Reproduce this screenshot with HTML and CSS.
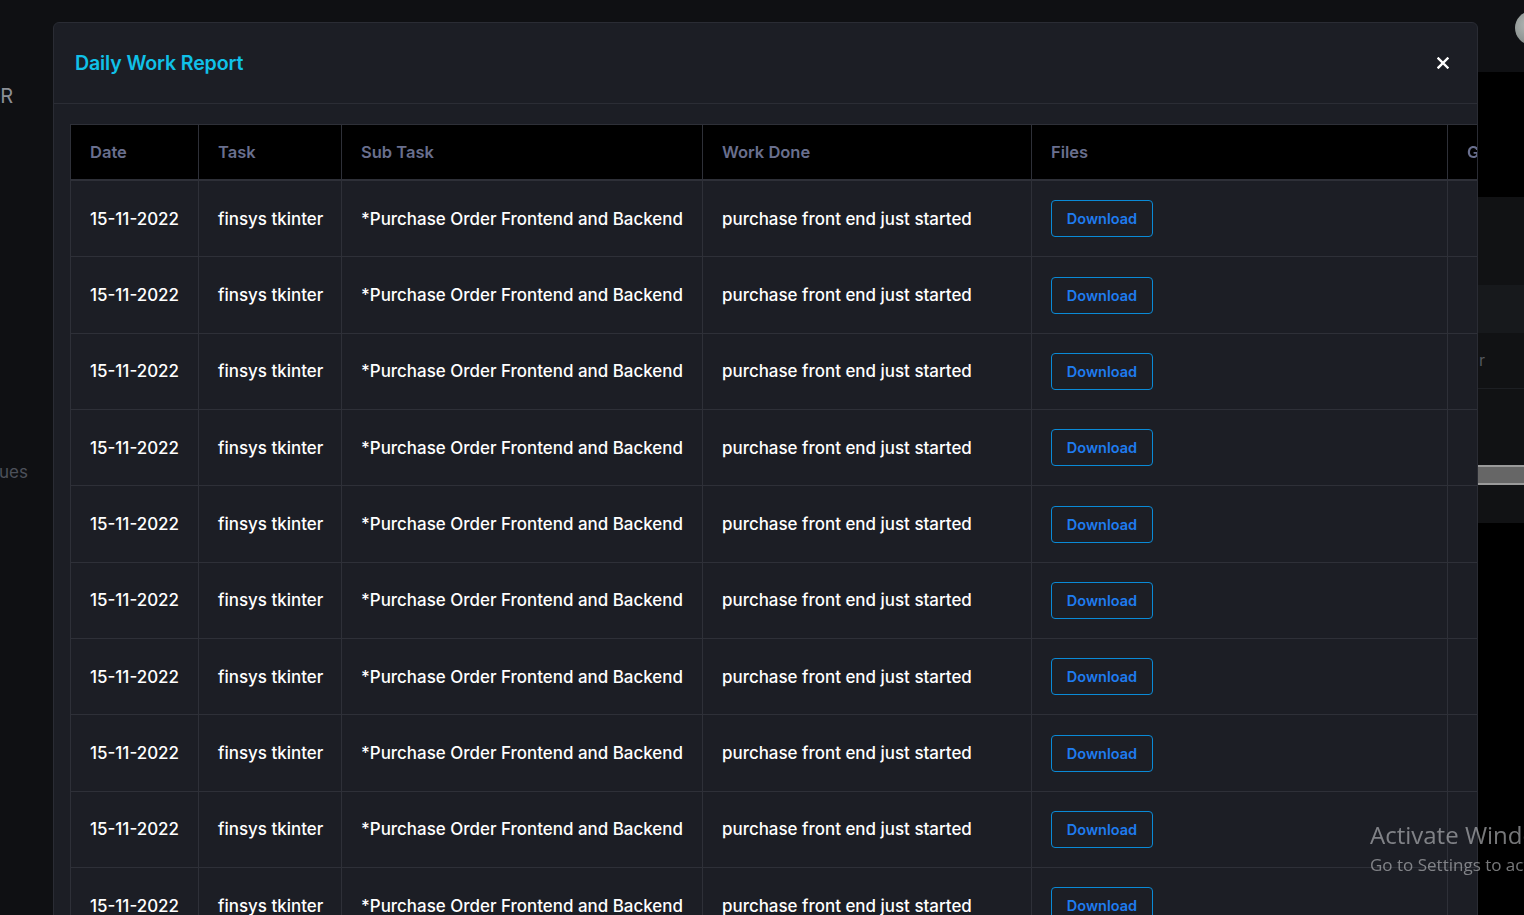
FILE: index.html
```html
<!DOCTYPE html>
<html lang="en">
<head>
<meta charset="utf-8">
<title>Daily Work Report</title>
<link rel="stylesheet" href="styles.css">
</head>
<body>
<div class="page">
  <aside class="sidebar">
    <div class="side-item side-r">R</div>
    <div class="side-item side-issues">Issues</div>
  </aside>
  <main class="main">
    <div class="topbar"><span class="avatar"></span></div>
    <div class="panel">
      <div class="blk blk-head"></div>
      <div class="blk blk-a"></div>
      <div class="blk blk-b"></div>
      <div class="blk blk-c"><span class="ghost">r</span></div>
      <div class="blk blk-d"></div>
      <div class="blk blk-bar"></div>
      <div class="blk blk-e"></div>
    </div>
  </main>
</div>

<div class="modal">
  <div class="modal-header">
    <h2 class="modal-title">Daily Work Report</h2>
    <button class="close" aria-label="Close">
      <svg width="12" height="12" viewBox="0 0 12 12"><path d="M1.5 1.5 L10.5 10.5 M10.5 1.5 L1.5 10.5" stroke="#ffffff" stroke-width="2.4" stroke-linecap="square"/></svg>
    </button>
  </div>
  <div class="modal-body">
    <table class="report">
      <colgroup>
        <col class="c-date"><col class="c-task"><col class="c-sub"><col class="c-work"><col class="c-files"><col class="c-given">
      </colgroup>
      <thead>
        <tr><th>Date</th><th>Task</th><th>Sub Task</th><th>Work Done</th><th>Files</th><th>Given By</th></tr>
      </thead>
      <tbody>
        <tr><td>15-11-2022</td><td>finsys tkinter</td><td>*Purchase Order Frontend and Backend</td><td>purchase front end just started</td><td><a class="btn-dl" href="#">Download</a></td><td></td></tr>
        <tr><td>15-11-2022</td><td>finsys tkinter</td><td>*Purchase Order Frontend and Backend</td><td>purchase front end just started</td><td><a class="btn-dl" href="#">Download</a></td><td></td></tr>
        <tr><td>15-11-2022</td><td>finsys tkinter</td><td>*Purchase Order Frontend and Backend</td><td>purchase front end just started</td><td><a class="btn-dl" href="#">Download</a></td><td></td></tr>
        <tr><td>15-11-2022</td><td>finsys tkinter</td><td>*Purchase Order Frontend and Backend</td><td>purchase front end just started</td><td><a class="btn-dl" href="#">Download</a></td><td></td></tr>
        <tr><td>15-11-2022</td><td>finsys tkinter</td><td>*Purchase Order Frontend and Backend</td><td>purchase front end just started</td><td><a class="btn-dl" href="#">Download</a></td><td></td></tr>
        <tr><td>15-11-2022</td><td>finsys tkinter</td><td>*Purchase Order Frontend and Backend</td><td>purchase front end just started</td><td><a class="btn-dl" href="#">Download</a></td><td></td></tr>
        <tr><td>15-11-2022</td><td>finsys tkinter</td><td>*Purchase Order Frontend and Backend</td><td>purchase front end just started</td><td><a class="btn-dl" href="#">Download</a></td><td></td></tr>
        <tr><td>15-11-2022</td><td>finsys tkinter</td><td>*Purchase Order Frontend and Backend</td><td>purchase front end just started</td><td><a class="btn-dl" href="#">Download</a></td><td></td></tr>
        <tr><td>15-11-2022</td><td>finsys tkinter</td><td>*Purchase Order Frontend and Backend</td><td>purchase front end just started</td><td><a class="btn-dl" href="#">Download</a></td><td></td></tr>
        <tr><td>15-11-2022</td><td>finsys tkinter</td><td>*Purchase Order Frontend and Backend</td><td>purchase front end just started</td><td><a class="btn-dl" href="#">Download</a></td><td></td></tr>
      </tbody>
    </table>
  </div>
</div>

<div class="watermark">
  <div class="wm-title">Activate Windows</div>
  <div class="wm-sub">Go to Settings to activate Windows.</div>
</div>
</body>
</html>
```

FILE: styles.css
```css
html, body {
  margin: 0;
  padding: 0;
  height: 100%;
  overflow: hidden;
}
body {
  background: #0f1013;
  font-family: Inter, "Noto Sans", sans-serif;
  color: #fff;
}

/* background page */
.page {
  display: flex;
  height: 100%;
}
.sidebar {
  width: 53px;
  flex: 0 0 53px;
  display: flex;
  flex-direction: column;
  overflow: hidden;
}
.side-item {
  white-space: nowrap;
  text-align: right;
  direction: rtl;
  width: 28px;
}
.side-r {
  margin-top: 84px;
  font-size: 20px;
  color: #8c8f96;
  width: 13px;
}
.side-issues {
  margin-top: 354px;
  font-size: 17px;
  color: #4d505a;
  width: 28px;
}
.main {
  flex: 1;
  display: flex;
  flex-direction: column;
  align-items: stretch;
}
.topbar {
  height: 72px;
  display: flex;
  justify-content: flex-end;
  align-items: flex-start;
  overflow: hidden;
}
.avatar {
  width: 34px;
  height: 34px;
  margin-top: 11px;
  margin-right: -25px;
  border-radius: 50%;
  background: radial-gradient(circle at 40% 40%, #b3b8b6 0%, #8d9492 60%, #6b7a62 100%);
  flex: 0 0 34px;
}
.panel {
  flex: 1;
  background: #000;
  display: flex;
  flex-direction: column;
}
.blk { flex: 0 0 auto; }
.blk-head { height: 125px; background: #000; }
.blk-a { height: 88px; background: #111214; }
.blk-b { height: 48px; background: #17191c; }
.blk-c { height: 55px; background: #111214; border-bottom: 1px solid #1d1f23; padding-left: 1426px; }
.ghost { font-size: 16px; color: #55585f; line-height: 55px; }
.blk-d { height: 76px; background: #111214; }
.blk-bar { height: 16px; background: #666; border-top: 2px solid #9a9a9a; border-bottom: 2px solid #9a9a9a; }
.blk-e { height: 38px; background: #111214; }

/* modal */
.modal {
  position: fixed;
  left: 53px;
  top: 22px;
  width: 1423px;
  height: 920px;
  background: #1c1e25;
  border: 1px solid #2a2c34;
  border-radius: 6px 6px 0 0;
  overflow: hidden;
}
.modal-header {
  height: 80px;
  padding: 0 28px 0 21px;
  display: flex;
  align-items: center;
  justify-content: space-between;
  border-bottom: 1px solid #2b2d35;
}
.modal-title {
  margin: 0;
  font-size: 19.6px;
  font-weight: 600;
  color: #10c1e8;
  letter-spacing: -0.15px;
}
.close {
  background: none;
  border: 0;
  padding: 0;
  width: 12px;
  height: 12px;
  display: flex;
  cursor: pointer;
}
.modal-body {
  padding: 20px 0 0 16px;
  overflow: hidden;
}

/* table */
.report {
  border-collapse: collapse;
  table-layout: fixed;
  width: 1578px;
}
.c-date { width: 128px; }
.c-task { width: 143px; }
.c-sub { width: 361px; }
.c-work { width: 329px; }
.c-files { width: 416px; }
.c-given { width: 201px; }
.report th,
.report td {
  border: 1px solid #2e3038;
  text-align: left;
  white-space: nowrap;
  overflow: hidden;
}
.report th {
  background: #000;
  height: 54px;
  padding: 0 19px;
  font-size: 16.5px;
  font-weight: 600;
  color: #696f8e;
  border-bottom: 2px solid #2e3038;
}
.report td {
  height: 75.35px;
  padding: 0 19px;
  font-size: 16.95px;
  font-weight: 500;
  color: #fff;
  vertical-align: middle;
}
.btn-dl {
  display: inline-flex;
  align-items: center;
  justify-content: center;
  width: 100px;
  height: 35px;
  border: 1px solid #0a8ad6;
  border-radius: 4px;
  color: #1f7cf0;
  font-size: 14.5px;
  font-weight: 600;
  text-decoration: none;
}

/* windows watermark */
.watermark {
  position: fixed;
  left: 1370px;
  top: 819px;
  white-space: nowrap;
  font-family: "Open Sans", "Noto Sans", sans-serif;
  color: rgba(190, 192, 196, 0.62);
  pointer-events: none;
}
.wm-title {
  font-size: 24px;
  line-height: 32px;
}
.wm-sub {
  font-size: 17px;
  line-height: 27px;
}
```
